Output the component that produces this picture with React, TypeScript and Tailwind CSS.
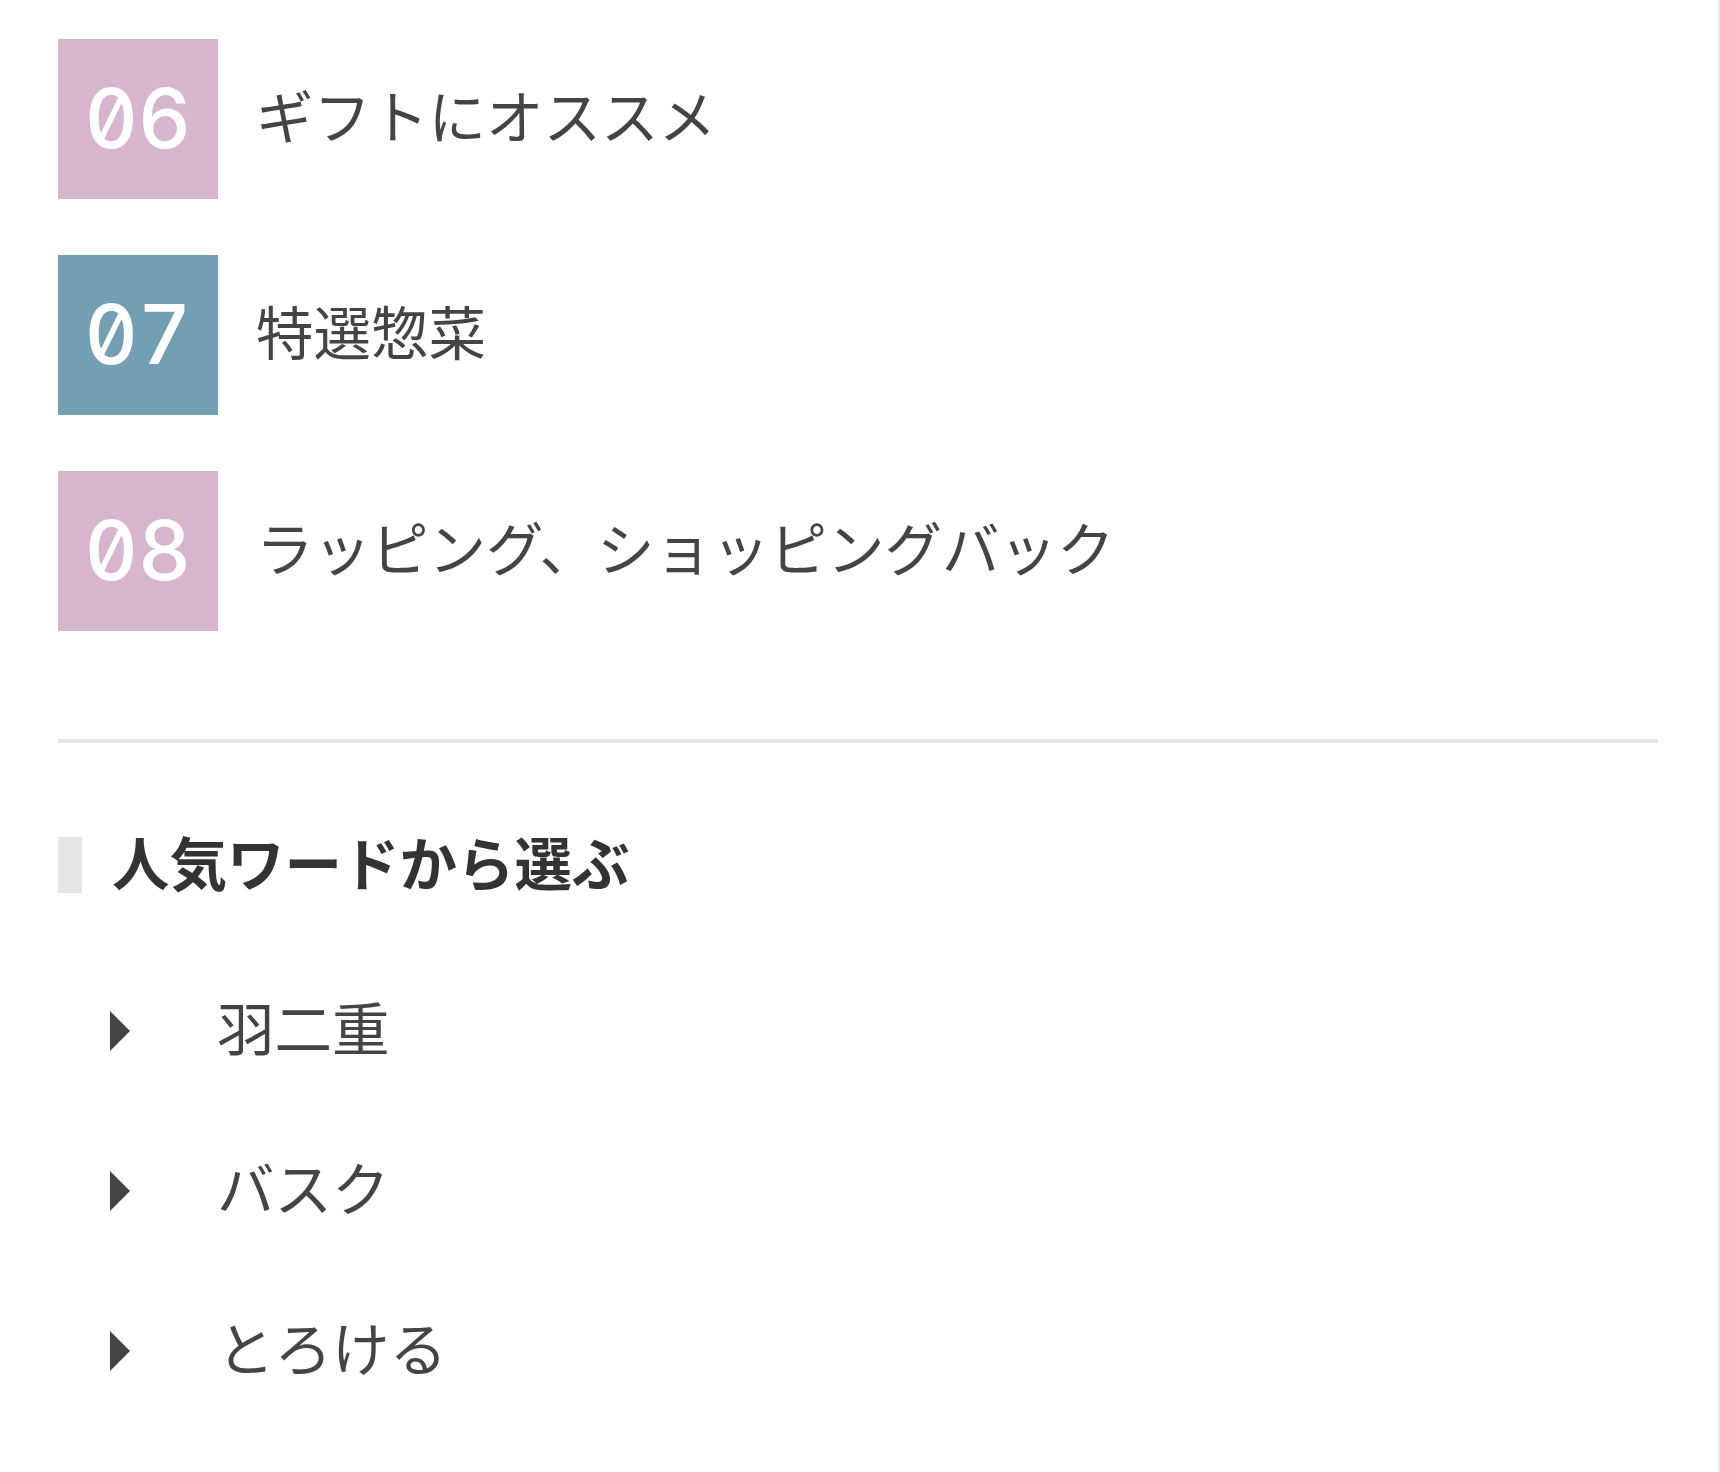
import React from "react";

const jp = { fontFamily: '"Noto Sans CJK JP", "Noto Sans", sans-serif' };
const num = { fontFamily: 'Inter, "Noto Sans", sans-serif' };

function NumItem({ n, label, color }: { n: string; label: string; color: string }) {
  return (
    <div className="flex items-center h-[160px]">
      <div className={`w-[160px] h-[160px] flex items-center justify-center text-white ${color}`} style={num}>
        <span className="text-[82px] leading-none font-medium slashed-zero tabular-nums">{n}</span>
      </div>
      <div className="ml-[38px] pb-[8px] text-[57.5px] leading-none text-[#444444]" style={jp}>
        {label}
      </div>
    </div>
  );
}

function Word({ label }: { label: string }) {
  return (
    <div className="flex items-center h-[160px]">
      <div className="ml-[52px] w-0 h-0 border-y-[20px] border-y-transparent border-l-[20px] border-l-[#444444]" />
      <div className="ml-[87px] pb-[8px] text-[57.5px] leading-none text-[#444444]" style={jp}>
        {label}
      </div>
    </div>
  );
}

export default function App() {
  return (
    <div className="w-[1720px] min-h-[1472px] bg-white border-r-2 border-r-[#e5e8ec]">
      <div className="ml-[58px] w-[1600px] pt-[39px]">
        <div className="flex flex-col gap-[56px]">
          <NumItem n="06" label="ギフトにオススメ" color="bg-[#d7b5cf]" />
          <NumItem n="07" label="特選惣菜" color="bg-[#739fb5]" />
          <NumItem n="08" label="ラッピング、ショッピングバック" color="bg-[#d7b5cf]" />
        </div>
        <div className="mt-[108px] h-[4px] bg-[#e5e5e5]" />
        <div className="mt-[94px] flex items-center h-[56px]">
          <div className="w-[24px] h-[56px] bg-[#e5e5e5]" />
          <div className="ml-[30px] pb-[6px] text-[57.5px] leading-none font-bold text-[#333333]" style={jp}>
            人気ワードから選ぶ
          </div>
        </div>
        <div className="mt-[58px] flex flex-col">
          <Word label="羽二重" />
          <Word label="バスク" />
          <Word label="とろける" />
        </div>
      </div>
    </div>
  );
}
